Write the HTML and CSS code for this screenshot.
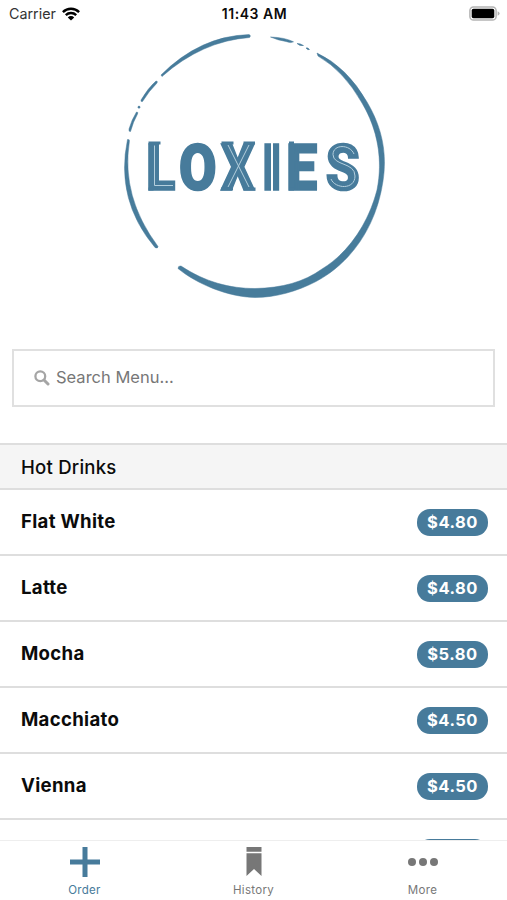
FILE: index.html
```html
<!DOCTYPE html>
<html lang="en">
<head>
<meta charset="utf-8">
<meta name="viewport" content="width=device-width, initial-scale=1">
<title>Loxies</title>
<link rel="stylesheet" href="styles.css">
</head>
<body>
<div class="app">
  <header class="status">
    <div class="carrier"><span>Carrier</span>
      <svg class="wifi" width="18" height="14" viewBox="0 0 18 14"><g fill="none" stroke="#000" stroke-width="2.4"><path d="M.9 5.1a11.5 11.5 0 0 1 16.2 0"/><path d="M3.8 8.1a7.4 7.4 0 0 1 10.4 0"/></g><path d="M9 13.6 5.8 10.4a4.5 4.5 0 0 1 6.4 0z"/></svg>
    </div>
    <span class="time">11:43 AM</span>
    <svg class="battery" width="31" height="15" viewBox="0 0 31 15"><rect x=".9" y=".9" width="26.2" height="13.2" rx="3.6" fill="#fff" stroke="#b4b4b4" stroke-width="1.5"/><rect x="2.7" y="2.7" width="22.6" height="9.6" rx="1.8"/><path d="M28.6 5.2q2 .7 2 2.3t-2 2.3z" fill="#b4b4b4"/></svg>
  </header>

  <main class="content">
    <svg class="logo" width="270" height="272" viewBox="119 30 270 272" role="img" aria-label="Loxies">
      <defs><filter id="rough" x="-5%" y="-5%" width="110%" height="110%"><feTurbulence type="fractalNoise" baseFrequency=".16" numOctaves="1" seed="4"/><feDisplacementMap in="SourceGraphic" scale="1.2" xChannelSelector="R" yChannelSelector="G"/></filter></defs>
      <g class="ring" filter="url(#rough)">
        <path d="M161 75Q200 36 249 34.600Q251.500 35.500 249.500 37.500Q202 41 162 76.500Z"/>
        <path d="M156 81Q158 81 157 83Q149 91 142.500 101.500Q140.500 102 141 100Q148 88 156 81Z"/>
        <circle cx="139" cy="107.200" r="1.100"/>
        <path d="M136.500 112Q138.500 112 137.500 114Q133 122 130.500 131.500Q128.500 132 129 129Q131.500 120 136.500 112Z"/>
        <path d="M127.500 139.500Q130 139 129.300 142Q121 197 158 246.500Q158 249 155 247.500Q115 200 127.500 139.500Z"/>
        <path d="M270.500 37Q285 37.500 293.500 41.800Q291 43.500 286 41.500Q277 40 270.500 37Z"/>
        <path d="M297 43.500Q300 43.200 303.500 45.500Q300 46.500 297 43.500ZM306 48Q308 47.200 309.500 49.500Q307.500 50.500 306 48Z"/>
        <path d="M317 53Q347 67 367 102C383 129 387 155 383 181C376 229 349 264 316 281.500C297 291.500 275 297.500 255 297.500C228 297 197 284 178 268.500Q178 265.500 181 266C205 282 230 288.500 255 288.500C282 288 304 282 322 269C350 252 369 221 377 190C383 160 378 130 362 103Q344 71 318 56Z"/>
      </g>
      <g class="wordmark">
        <text transform="translate(146 189.600) scale(.8 .965)">L</text>
        <text transform="translate(179 189.600) scale(.8 .965)">O</text>
        <text transform="translate(221 189.600) scale(.77 .965)">X</text>
        <text transform="translate(260.500 189.600) scale(1.100 .965)">I</text>
        <text transform="translate(286 189.600) scale(.82 .965)">E</text>
        <text transform="translate(325.500 189.600) scale(.81 .965)">S</text>
      </g>
      <path class="serif" d="M148.500 143h12M148.500 189h5M221.500 143h12M243.500 143h11.500M221 189h12M243.500 189h12M289 143h5M289 189h5"/>
      <g class="inline">
        <path d="M154.500 145.500V185.500H173"/>
        <path d="M228 145 249 187M249 145 228 187"/>
        <path class="split" d="M272 139V192"/>
        <path d="M354 154C350 144 333 144 333 154.500C333 166 355 162 355 176C355 190 335 189 331 179"/>
      </g>
    </svg>

    <label class="search">
      <svg width="16" height="16" viewBox="0 0 16 16" fill="none" stroke="#a5a5a5"><circle cx="6.300" cy="6.300" r="4.900" stroke-width="2.300"/><path d="M10 10l4 4" stroke-width="3" stroke-linecap="round"/></svg>
      <span>Search Menu...</span>
    </label>

    <h2 class="section">Hot Drinks</h2>
    <ul class="menu">
      <li><span>Flat White</span><b>$4.80</b></li>
      <li><span>Latte</span><b>$4.80</b></li>
      <li><span>Mocha</span><b>$5.80</b></li>
      <li><span>Macchiato</span><b>$4.50</b></li>
      <li><span>Vienna</span><b>$4.50</b></li>
      <li><span></span><b></b></li>
    </ul>
  </main>

  <nav class="tabs">
    <div class="tab active"><svg width="30" height="30" viewBox="0 0 30 30"><path d="M12.500 0h5v12.500H30v5H17.500V30h-5V17.500H0v-5h12.500z"/></svg><span>Order</span></div>
    <div class="tab"><svg width="30" height="30" viewBox="0 0 30 30"><path d="M7.500 0h15v4.800h-15zM7.500 6.200h15V29L15 22 7.500 29z"/></svg><span>History</span></div>
    <div class="tab"><svg width="30" height="30" viewBox="0 0 30 30"><circle cx="4" cy="15" r="4"/><circle cx="15" cy="15" r="4"/><circle cx="26" cy="15" r="4"/></svg><span>More</span></div>
  </nav>
</div>
</body>
</html>
```
FILE: styles.css
```css
* { box-sizing: border-box; }
body { margin: 0; background: #fff; color: #0b0b0b; font-family: Inter, "Liberation Sans", sans-serif; }
.app { height: 900px; display: flex; flex-direction: column; overflow: hidden; }
.status { flex: none; height: 30px; padding: 0 7px 3px 9px; display: grid; grid-template-columns: 1fr auto 1fr; align-items: center; }
.carrier { display: flex; align-items: center; gap: 6px; font-size: 14.3px; color: #333; }
.time { font-size: 14px; font-weight: 600; letter-spacing: .55px; }
.battery { justify-self: end; }
.content { flex: 1; min-height: 0; overflow: hidden; }
.logo { display: block; margin: 0 0 0 119px; }
.ring { fill: #477b9b; stroke: #477b9b; stroke-width: .5; }
.wordmark { fill: #477b9b; stroke: #477b9b; stroke-width: 1.8; font: 900 68px Roboto, sans-serif; }
.serif { fill: none; stroke: #477b9b; stroke-width: 3; }
.inline { fill: none; stroke: #b4cfdd; stroke-width: 1; }
.inline .split { stroke: #fff; stroke-width: 2; }
.search { display: flex; align-items: center; gap: 6px; height: 58px; margin: 47px 12px 36px; padding: 0 20px; border: 2px solid #e0e0e0; color: #777; font-size: 16.5px; }
.search span { padding-bottom: 2px; }
.section { height: 47px; margin: 0; padding: 0 21px; border: solid #dedede; border-width: 2px 0; background: #f5f5f5; font-size: 18.6px; font-weight: 500; line-height: 44px; letter-spacing: .2px; }
.menu { margin: 0; padding: 0; list-style: none; }
.menu li { display: flex; justify-content: space-between; height: 66px; padding: 17px 19px 0 21px; border-bottom: 2px solid #dedede; }
.menu span { font-size: 18.6px; font-weight: 700; line-height: 28px; letter-spacing: .3px; }
.menu b { width: 71px; height: 27px; margin-top: 2px; border-radius: 13px; background: #477b9b; color: #fff; font-size: 16.5px; font-weight: 700; line-height: 27px; letter-spacing: .5px; text-align: center; }
.tabs { flex: none; height: 60px; border-top: 1px solid #eee; display: grid; grid-template-columns: repeat(3, 1fr); background: #fff; }
.tab { display: flex; flex-direction: column; align-items: center; padding-top: 6px; color: #777; fill: #777; font-size: 11.5px; line-height: 15px; letter-spacing: .3px; }
.tab span { margin-top: 6px; }
.active { color: #477b9b; fill: #477b9b; }
```
